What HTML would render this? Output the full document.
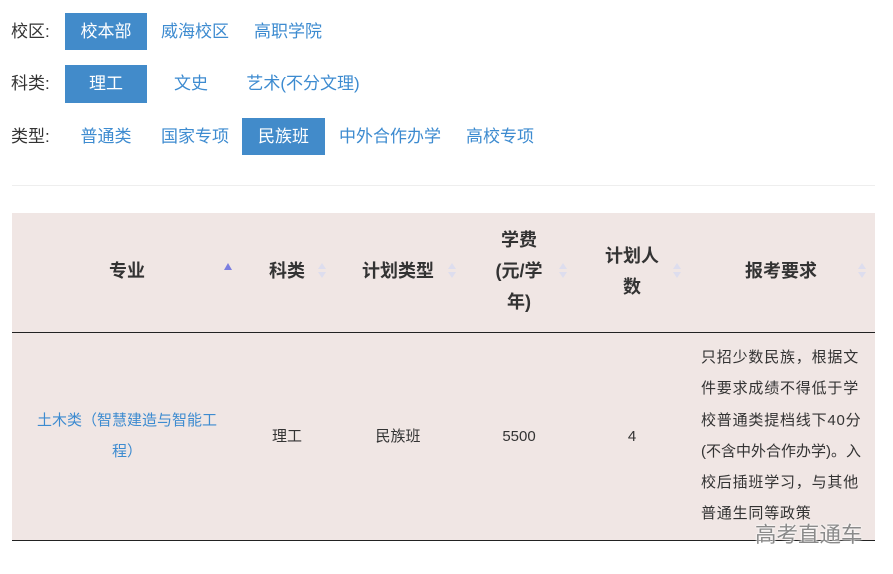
<!DOCTYPE html>
<html><head><meta charset="utf-8"><style>
body{margin:0;width:893px;height:574px;background:#fff;font-family:"Liberation Sans","Noto Sans CJK SC",sans-serif;position:relative;overflow:hidden}
.a{position:absolute;white-space:nowrap}
.lbl{font-size:17px;color:#333}
.f{font-size:17px;color:#3d8bd0;text-align:center;line-height:37px;height:37px}
.on{background:#428bca;color:#fff}
.th{font-size:18px;font-weight:bold;color:#333;text-align:center;line-height:31px}
.td{font-size:15px;color:#333;text-align:center;line-height:31px}
.ar{position:absolute;width:0;height:0;border-left:4px solid transparent;border-right:4px solid transparent}
</style></head><body>
<div class="a lbl" style="left:11px;top:17px">校区:</div>
<div class="a f on" style="left:65px;top:13px;width:82px">校本部</div>
<div class="a f" style="left:155px;top:13px;width:80px">威海校区</div>
<div class="a f" style="left:248px;top:13px;width:80px">高职学院</div>
<div class="a lbl" style="left:11px;top:69px">科类:</div>
<div class="a f on" style="left:65px;top:65px;width:82px;height:38px">理工</div>
<div class="a f" style="left:160px;top:65px;width:62px">文史</div>
<div class="a f" style="left:244px;top:65px;width:118px">艺术(不分文理)</div>
<div class="a lbl" style="left:11px;top:122px">类型:</div>
<div class="a f" style="left:75px;top:118px;width:62px">普通类</div>
<div class="a f" style="left:158px;top:118px;width:74px">国家专项</div>
<div class="a f on" style="left:242px;top:118px;width:83px">民族班</div>
<div class="a f" style="left:336px;top:118px;width:108px">中外合作办学</div>
<div class="a f" style="left:462px;top:118px;width:76px">高校专项</div>
<div class="a" style="left:12px;top:185px;width:863px;height:1px;background:#eee"></div>

<div class="a" style="left:12px;top:213px;width:863px;height:327px;background:#f0e6e4"></div>
<div class="a" style="left:12px;top:332px;width:863px;height:1px;background:#222"></div>
<div class="a" style="left:12px;top:540px;width:863px;height:1px;background:#222"></div>

<div class="a th" style="left:97px;top:256px;width:60px">专业</div>
<div class="ar" style="left:224px;top:263px;border-bottom:7px solid #7b7ee0"></div>
<div class="a th" style="left:257px;top:256px;width:60px">科类</div>
<div class="a th" style="left:358px;top:256px;width:80px">计划类型</div>
<div class="a th" style="left:489px;top:225px;width:60px">学费<br>(元/学<br>年)</div>
<div class="a th" style="left:602px;top:241px;width:60px">计划人<br>数</div>
<div class="a th" style="left:741px;top:256px;width:80px">报考要求</div>
<div class="ar" style="left:318px;top:263px;border-bottom:6px solid #dde"></div><div class="ar" style="left:318px;top:272px;border-top:6px solid #dde"></div>
<div class="ar" style="left:448px;top:263px;border-bottom:6px solid #dde"></div><div class="ar" style="left:448px;top:272px;border-top:6px solid #dde"></div>
<div class="ar" style="left:559px;top:263px;border-bottom:6px solid #dde"></div><div class="ar" style="left:559px;top:272px;border-top:6px solid #dde"></div>
<div class="ar" style="left:673px;top:263px;border-bottom:6px solid #dde"></div><div class="ar" style="left:673px;top:272px;border-top:6px solid #dde"></div>
<div class="ar" style="left:858px;top:263px;border-bottom:6px solid #dde"></div><div class="ar" style="left:858px;top:272px;border-top:6px solid #dde"></div>

<div class="a td" style="left:27px;top:405px;width:200px;color:#3d8bd0">土木类（智慧建造与智能工<br>程）</div>
<div class="a td" style="left:257px;top:421px;width:60px">理工</div>
<div class="a td" style="left:358px;top:421px;width:80px">民族班</div>
<div class="a td" style="left:489px;top:421px;width:60px">5500</div>
<div class="a td" style="left:602px;top:421px;width:60px">4</div>
<div class="a td" style="left:701px;top:342px;text-align:left;line-height:31.3px;letter-spacing:0.8px">只招少数民族，根据文<br>件要求成绩不得低于学<br>校普通类提档线下40分<br><span style="letter-spacing:0">(不含中外合作办学)。入</span><br>校后插班学习，与其他<br>普通生同等政策</div>
<div class="a" style="left:755px;top:518px;font-size:21.5px;color:#8a8a8a;text-shadow:0 0 2px #fff,0 0 2px #fff">高考直通车</div>
</body></html>
